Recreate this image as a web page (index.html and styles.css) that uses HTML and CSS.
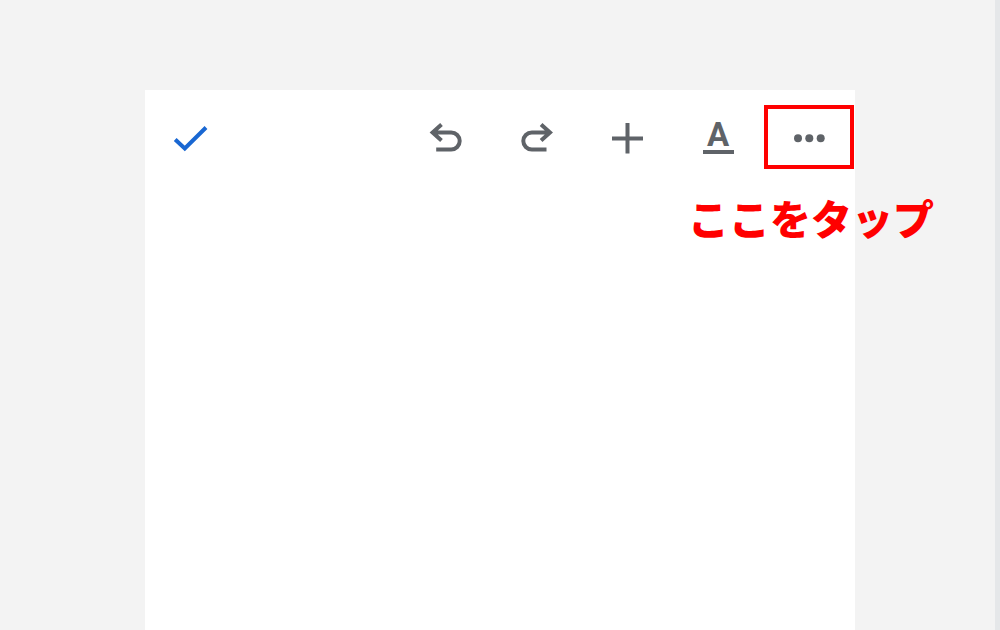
FILE: index.html
```html
<!DOCTYPE html>
<html lang="ja">
<head>
<meta charset="utf-8">
<meta name="viewport" content="width=device-width, initial-scale=1">
<title>ドキュメント</title>
<link rel="stylesheet" href="styles.css">
</head>
<body>
<main class="sheet">
  <div class="toolbar" role="toolbar" aria-label="編集ツール">
    <button class="tool tool-done" type="button" aria-label="完了">
      <svg class="icon" viewBox="0 0 36 36"><path d="M2.2 20.5 11.8 29.5 33 8.5"/></svg>
    </button>
    <button class="tool" type="button" aria-label="元に戻す">
      <svg class="icon" viewBox="0 0 36 36"><path d="M14.5 5.5 5.6 13.5 14.5 21.5M6 13.5H24.2A8.5 8.5 0 0 1 24.2 30.5H9.2"/></svg>
    </button>
    <button class="tool" type="button" aria-label="やり直す">
      <svg class="icon" viewBox="0 0 36 36"><path d="M23.1 5.5 32 13.5 23.1 21.5M32 13.5H13.8A8.5 8.5 0 0 0 13.8 30.5H28.5"/></svg>
    </button>
    <button class="tool" type="button" aria-label="挿入">
      <svg class="icon" viewBox="0 0 36 36"><path d="M18.5 4V34.5M3 19.5H34"/></svg>
    </button>
    <button class="tool" type="button" aria-label="書式"><span class="letter">A</span></button>
    <div class="callout">
      <button class="tool tool-more" type="button" aria-label="その他">
        <svg class="icon icon-dots" viewBox="0 0 36 36"><circle cx="7" cy="19.2" r="4"/><circle cx="18.3" cy="19.2" r="4"/><circle cx="29.7" cy="19.2" r="4"/></svg>
      </button>
      <p class="hint">ここをタップ</p>
    </div>
  </div>
</main>
</body>
</html>
```
FILE: styles.css
```css
* {
  box-sizing: border-box;
}

body {
  margin: 0;
  min-height: 100vh;
  display: flex;
  padding: 90px 140px 0 145px;
  background: #f3f3f3;
  border-right: 5px solid #e5e7e9;
  font-family: "Liberation Sans", "Noto Sans CJK JP", sans-serif;
}

.sheet {
  flex: 1;
  background: #fff;
}

.toolbar {
  display: flex;
  gap: 1px;
  padding: 15px 1px;
}

.tool {
  display: flex;
  align-items: center;
  justify-content: center;
  width: 90px;
  height: 64px;
  padding: 0;
  border: 0;
  background: none;
  color: #5f6368;
}

.tool-done {
  margin-right: auto;
  color: #1967d2;
}

.tool-more {
  border: 4px solid #f00;
}

.icon {
  width: 36px;
  height: 36px;
  fill: none;
  stroke: currentColor;
  stroke-width: 4;
}

.icon-dots {
  fill: currentColor;
  stroke: none;
}

.letter {
  width: 31px;
  padding-bottom: 1px;
  border-bottom: 4px solid currentColor;
  font: 700 33px/28px Roboto, sans-serif;
}

.callout {
  position: relative;
}

.hint {
  position: absolute;
  top: 82px;
  right: -80px;
  margin: 0;
  color: #f00;
  font: 900 41px/60px "Noto Sans CJK JP", sans-serif;
  white-space: nowrap;
}
```
